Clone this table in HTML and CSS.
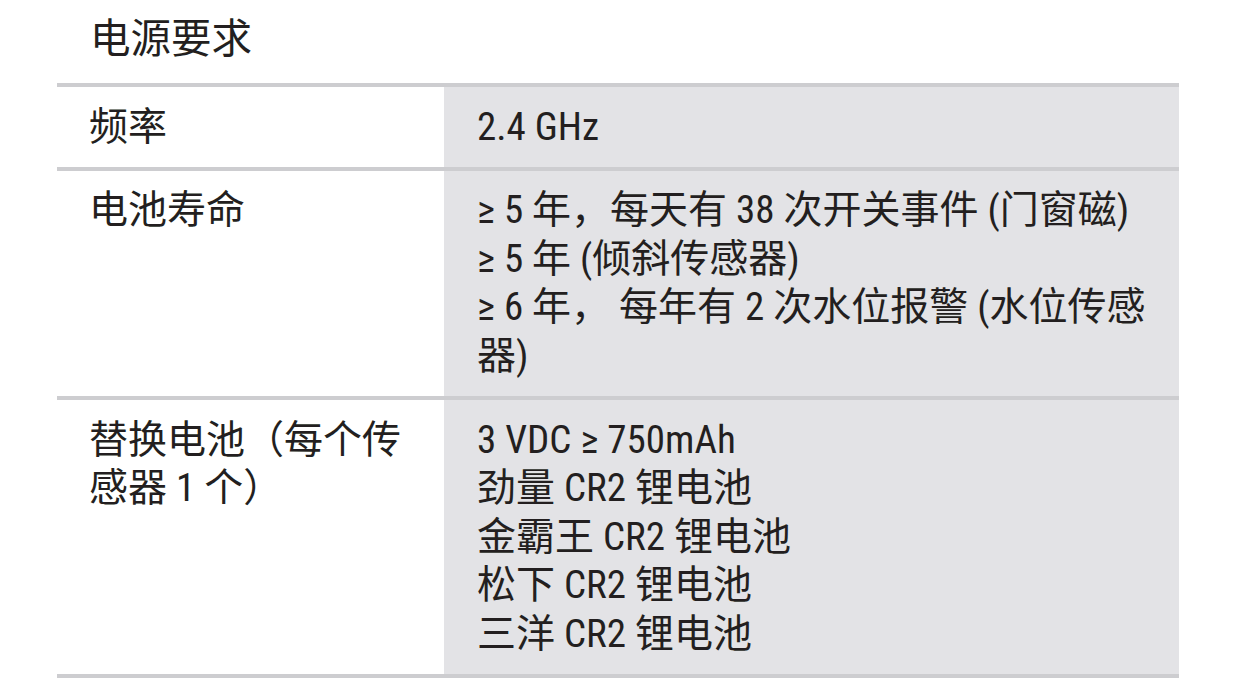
FILE: index.html
```html
<!DOCTYPE html>
<html lang="zh-CN">
<head>
<meta charset="utf-8">
<title>电源要求</title>
<link rel="stylesheet" href="styles.css">
</head>
<body>
<div class="page">
  <h1 class="title">电源要求</h1>
  <div class="spec">
    <div class="row">
      <div class="label">频率</div>
      <div class="value">
        <div class="line">2.4 GHz</div>
      </div>
    </div>
    <div class="row">
      <div class="label">电池寿命</div>
      <div class="value">
        <div class="line">≥ 5 年，每天有 38 次开关事件 (门窗磁)</div>
        <div class="line">≥ 5 年 (倾斜传感器)</div>
        <div class="line">≥ 6 年，&nbsp;每年有 2 次水位报警 (水位传感<br>器)</div>
      </div>
    </div>
    <div class="row">
      <div class="label">替换电池（每个传<br>感器 1 个）</div>
      <div class="value">
        <div class="line">3 VDC ≥ 750mAh</div>
        <div class="line">劲量 CR2 锂电池</div>
        <div class="line">金霸王 CR2 锂电池</div>
        <div class="line">松下 CR2 锂电池</div>
        <div class="line">三洋 CR2 锂电池</div>
      </div>
    </div>
  </div>
</div>
</body>
</html>
```
FILE: styles.css
```css
html, body {
  margin: 0;
  padding: 0;
  background: #ffffff;
}
body {
  font-family: Roboto, "Noto Sans CJK SC", sans-serif;
  font-stretch: 87.5%;
  color: #231f20;
}
.page {
  padding-left: 57px;
  width: 1122px;
}
.title {
  margin: 0;
  padding: 15px 0 0 33px;
  height: 83px;
  box-sizing: border-box;
  font-size: 40.5px;
  line-height: 48px;
  font-weight: 400;
}
.spec {
  border-top: 4px solid #cdcdd0;
}
.row {
  display: grid;
  grid-template-columns: 387px 1fr;
  border-bottom: 4px solid #cdcdd0;
}
.label,
.value {
  font-size: 39px;
  line-height: 48.6px;
  padding: 15.6px 0 15.4px;
}
.label {
  padding-left: 32px;
  background: #ffffff;
}
.value {
  padding-left: 33px;
  background: #e3e3e6;
}
.line {
  white-space: nowrap;
}
```
